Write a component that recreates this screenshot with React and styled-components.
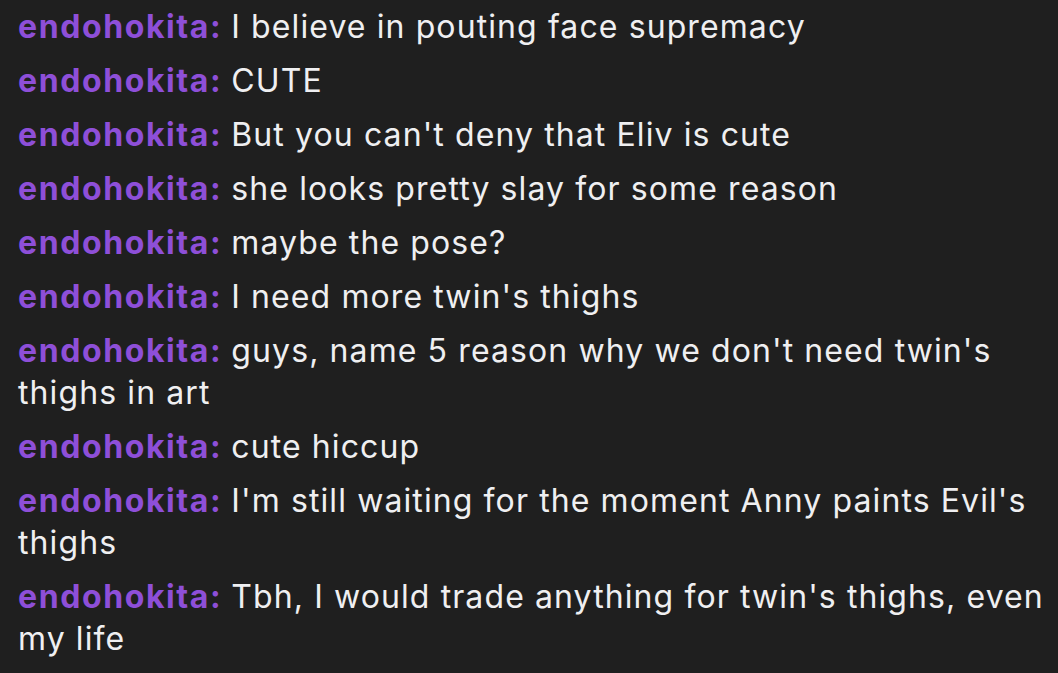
import React from "react";
import styled, { createGlobalStyle } from "styled-components";

const messages = [
  { user: "endohokita", text: "I believe in pouting face supremacy" },
  { user: "endohokita", text: "CUTE" },
  { user: "endohokita", text: "But you can't deny that Eliv is cute" },
  { user: "endohokita", text: "she looks pretty slay for some reason" },
  { user: "endohokita", text: "maybe the pose?" },
  { user: "endohokita", text: "I need more twin's thighs" },
  { user: "endohokita", text: "guys, name 5 reason why we don't need twin's thighs in art" },
  { user: "endohokita", text: "cute hiccup" },
  { user: "endohokita", text: "I'm still waiting for the moment Anny paints Evil's thighs" },
  { user: "endohokita", text: "Tbh, I would trade anything for twin's thighs, even my life" },
];

function App() {
  return (
    <>
      <GlobalStyle />
      <Chat>
        {messages.map((m, i) => (
          <Line key={i}>
            <Name>{m.user}:</Name> <Text>{m.text}</Text>
          </Line>
        ))}
      </Chat>
    </>
  );
}

const GlobalStyle = createGlobalStyle`
  html, body {
    margin: 0;
    background: #1f1f1f;
  }
`;

const Chat = styled.div`
  display: flex;
  flex-direction: column;
  padding: 0 6px 0 18px;
  font-family: Inter, "Noto Sans", sans-serif;
  font-size: 32px;
  line-height: 42px;
  color: #efeff1;
`;

const Line = styled.div`
  padding: 6px 0;
`;

const Name = styled.span`
  font-weight: 700;
  letter-spacing: 1.6px;
  color: #8e4fd8;
`;

const Text = styled.span`
  font-weight: 400;
  letter-spacing: 1.1px;
`;

export default App;
